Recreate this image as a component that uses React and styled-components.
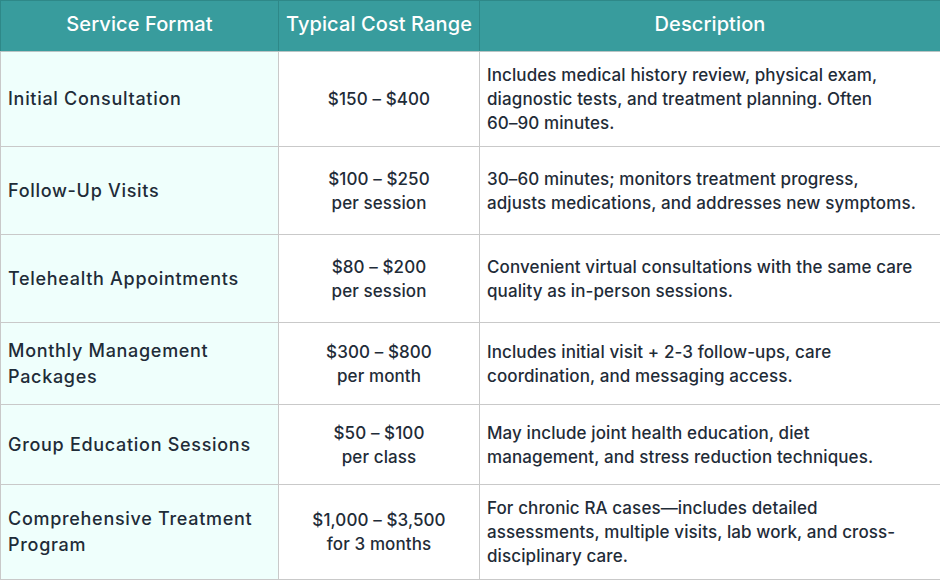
import React from "react";
import styled, { createGlobalStyle } from "styled-components";

const Global = createGlobalStyle`
  html, body { margin: 0; padding: 0; background: #ffffff; }
  body { font-family: Inter, "Noto Sans", sans-serif; }
`;

const Table = styled.table`
  width: 940px;
  border-collapse: collapse;
  table-layout: fixed;
  font-family: Inter, "Noto Sans", sans-serif;
  color: #1f2c38;
`;

const HeadCell = styled.th`
  height: 51px;
  padding: 0 6px 4px;
  background: #389c9d;
  color: #ffffff;
  font-size: 20px;
  font-weight: 500;
  letter-spacing: 0.1px;
  text-align: center;
  border: 1px solid #2e8888;
  border-bottom: 1px solid #b9c4c4;
  box-sizing: border-box;
  white-space: nowrap;
`;

const Row = styled.tr`
  height: ${(p) => p.$h}px;
`;

const Cell = styled.td`
  padding: 0 7px;
  border: 1px solid #c9c9c9;
  vertical-align: middle;
  white-space: nowrap;
  font-weight: 500;
  background: #ffffff;
`;

const NameCell = styled(Cell)`
  background: #effffc;
  font-size: 18px;
  letter-spacing: 0.7px;
  line-height: 26px;
`;

const CostCell = styled(Cell)`
  text-align: center;
  font-size: 17px;
  letter-spacing: 0.1px;
  line-height: 24px;
`;

const DescCell = styled(Cell)`
  font-size: 17px;
  letter-spacing: 0.1px;
  line-height: 24px;
`;

const rows = [
  {
    h: 95,
    name: ["Initial Consultation"],
    cost: ["$150 – $400"],
    desc: [
      "Includes medical history review, physical exam,",
      "diagnostic tests, and treatment planning. Often",
      "60–90 minutes.",
    ],
  },
  {
    h: 88,
    name: ["Follow-Up Visits"],
    cost: ["$100 – $250", "per session"],
    desc: [
      "30–60 minutes; monitors treatment progress,",
      "adjusts medications, and addresses new symptoms.",
    ],
  },
  {
    h: 88,
    name: ["Telehealth Appointments"],
    cost: ["$80 – $200", "per session"],
    desc: [
      "Convenient virtual consultations with the same care",
      "quality as in-person sessions.",
    ],
  },
  {
    h: 82,
    name: ["Monthly Management", "Packages"],
    cost: ["$300 – $800", "per month"],
    desc: [
      "Includes initial visit + 2-3 follow-ups, care",
      "coordination, and messaging access.",
    ],
  },
  {
    h: 80,
    name: ["Group Education Sessions"],
    cost: ["$50 – $100", "per class"],
    desc: [
      "May include joint health education, diet",
      "management, and stress reduction techniques.",
    ],
  },
  {
    h: 95,
    name: ["Comprehensive Treatment", "Program"],
    cost: ["$1,000 – $3,500", "for 3 months"],
    desc: [
      "For chronic RA cases—includes detailed",
      "assessments, multiple visits, lab work, and cross-",
      "disciplinary care.",
    ],
  },
];

function Lines({ items }) {
  return items.map((t, i) => (
    <React.Fragment key={i}>
      {i > 0 && <br />}
      {t}
    </React.Fragment>
  ));
}

export default function App() {
  return (
    <>
      <Global />
      <Table>
        <colgroup>
          <col style={{ width: 278 }} />
          <col style={{ width: 201 }} />
          <col style={{ width: 461 }} />
        </colgroup>
        <thead>
          <tr>
            <HeadCell>Service Format</HeadCell>
            <HeadCell>Typical Cost Range</HeadCell>
            <HeadCell>Description</HeadCell>
          </tr>
        </thead>
        <tbody>
          {rows.map((r) => (
            <Row key={r.name[0]} $h={r.h}>
              <NameCell>
                <Lines items={r.name} />
              </NameCell>
              <CostCell>
                <Lines items={r.cost} />
              </CostCell>
              <DescCell>
                <Lines items={r.desc} />
              </DescCell>
            </Row>
          ))}
        </tbody>
      </Table>
    </>
  );
}
